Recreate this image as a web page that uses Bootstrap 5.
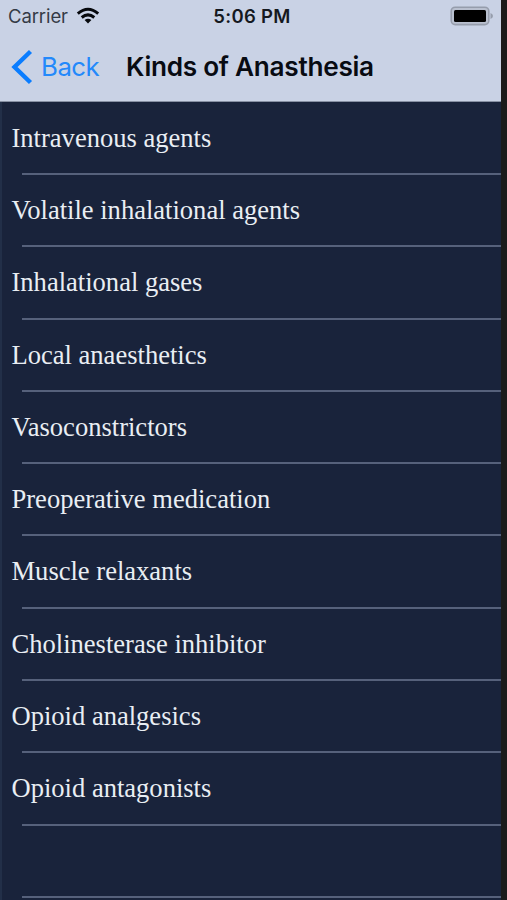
<!DOCTYPE html>
<html lang="en">
<head>
<meta charset="utf-8">
<meta name="viewport" content="width=device-width, initial-scale=1">
<title>Kinds of Anasthesia</title>
<link href="https://cdn.jsdelivr.net/npm/bootstrap@5.3.0/dist/css/bootstrap.min.css" rel="stylesheet">
<style>
body{background:#1b1b1b;font-family:Inter,"Liberation Sans",sans-serif;overflow:hidden}
.screen{width:501px;height:900px;background:#19233b;box-shadow:inset 2px 0 0 #222f48}
.topbar{height:102px;background:#c9d2e5;border-bottom:1px solid #8790a3}
.status{height:32px;padding:0 8px 0 8px;color:#15191f;font-size:18.5px;line-height:32px}
.carrier{color:#343a46;letter-spacing:-.1px}
.clock{font-weight:600;letter-spacing:.3px;margin-left:3px}
.side{flex:1 1 0}
.titlebar{height:69px;padding-left:11px;padding-top:1px}
.back{color:#2389fb;font-size:25.8px;width:115px;text-decoration:none;letter-spacing:-.5px}
.page-title{font-size:26.2px;font-weight:600;color:#080b12;letter-spacing:-.28px}
.kinds{--bs-list-group-bg:transparent;--bs-list-group-color:#e9eef3;font-family:"Liberation Serif",serif;font-size:26.55px}
.kinds .list-group-item{height:72.3px;padding:0 0 0 11.5px;line-height:70.6px;border:0;background:linear-gradient(#56617b,#56617b) 22px 100%/100% 2px no-repeat;white-space:nowrap}
.kinds .list-group-item:first-child{height:73px;line-height:72px}
</style>
<script src="https://cdn.jsdelivr.net/npm/bootstrap@5.3.0/dist/js/bootstrap.bundle.min.js"></script>
</head>
<body>
<main class="screen overflow-hidden">
  <header class="topbar">
    <div class="status d-flex align-items-center">
      <div class="side d-flex align-items-center"><span class="carrier">Carrier</span>
        <svg class="ms-2" width="24" height="18" viewBox="0 0 24 18" fill="none" stroke="#07090d" stroke-width="3"><path d="M1.8 6.6Q12 -2 22.2 6.6M5.7 10.5Q12 5.3 18.3 10.5"/><path d="M8.6 13Q12 10.5 15.4 13L12 16.6Z" fill="#07090d" stroke="none"/></svg>
      </div>
      <span class="clock">5:06 PM</span>
      <div class="side d-flex justify-content-end">
        <svg width="43" height="20" viewBox="0 0 43 20"><rect x="1.2" y="1.2" width="37.6" height="17.4" rx="4" fill="#b9c0cf" stroke="#969dac" stroke-width="1.6"/><rect x="4" y="4" width="32" height="12" rx="1.5" fill="#000"/><path d="M40.5 7Q43 8 43 10T40.5 13Z" fill="#969dac"/></svg>
      </div>
    </div>
    <nav class="titlebar d-flex align-items-center">
      <a href="#" class="back d-flex align-items-center"><svg class="me-2" width="22" height="36" viewBox="0 0 22 36" fill="none" stroke="#0a7dff" stroke-width="4.4"><path d="M19.5 2.5L3.5 18L19.5 33.5"/></svg>Back</a>
      <h1 class="page-title mb-0">Kinds of Anasthesia</h1>
    </nav>
  </header>
  <ul class="kinds list-group list-group-flush">
    <li class="list-group-item">Intravenous agents</li>
    <li class="list-group-item">Volatile inhalational agents</li>
    <li class="list-group-item">Inhalational gases</li>
    <li class="list-group-item">Local anaesthetics</li>
    <li class="list-group-item">Vasoconstrictors</li>
    <li class="list-group-item">Preoperative medication</li>
    <li class="list-group-item">Muscle relaxants</li>
    <li class="list-group-item">Cholinesterase inhibitor</li>
    <li class="list-group-item">Opioid analgesics</li>
    <li class="list-group-item">Opioid antagonists</li>
    <li class="list-group-item" aria-hidden="true"></li>
  </ul>
</main>
</body>
</html>
